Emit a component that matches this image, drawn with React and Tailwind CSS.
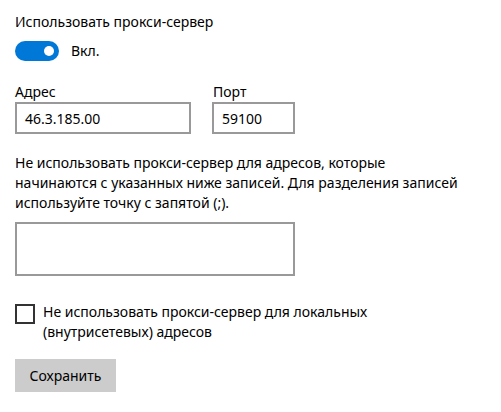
export default function App() {
  return (
    <div
      className="w-[501px] h-[412px] bg-white text-black px-[15px] pt-[12px]"
      style={{ fontFamily: '"Noto Sans", "Segoe UI", sans-serif' }}
    >
      <div className="text-[14px] leading-[20px]">Использовать прокси-сервер</div>
      <div className="mt-[9px] flex items-center h-[20px]">
        <div className="w-[44px] h-[20px] rounded-full bg-[#0078d7] flex items-center justify-end pr-[5px]">
          <div className="w-[10px] h-[10px] rounded-full bg-white" />
        </div>
        <span className="ml-[12px] text-[14px] leading-[20px]">Вкл.</span>
      </div>
      <div className="mt-[21px] flex">
        <div className="flex flex-col">
          <div className="text-[14px] leading-[20px]">Адрес</div>
          <div className="w-[176px] h-[32px] border-2 border-[#999999] flex items-center pl-[8px] text-[14px]">
            46.3.185.00
          </div>
        </div>
        <div className="flex flex-col ml-[21px]">
          <div className="text-[14px] leading-[20px] pl-[1px]">Порт</div>
          <div className="w-[83px] h-[32px] border-2 border-[#999999] flex items-center pl-[8px] text-[14px]">
            59100
          </div>
        </div>
      </div>
      <div className="mt-[19px] text-[14px] leading-[20px]">
        Не использовать прокси-сервер для адресов, которые
        <br />
        начинаются с указанных ниже записей. Для разделения записей
        <br />
        используйте точку с запятой (;).
      </div>
      <div className="mt-[9px] w-[280px] h-[54px] border-2 border-[#999999]" />
      <div className="mt-[26px] flex items-start">
        <div className="mt-[2px] w-[20px] h-[20px] border-2 border-[#333333] shrink-0" />
        <div className="ml-[8px] text-[14px] leading-[20px]">
          Не использовать прокси-сервер для локальных
          <br />
          (внутрисетевых) адресов
        </div>
      </div>
      <div className="mt-[17px] w-[101px] h-[33px] bg-[#cccccc] flex items-center justify-center text-[14px]">
        Сохранить
      </div>
    </div>
  );
}
